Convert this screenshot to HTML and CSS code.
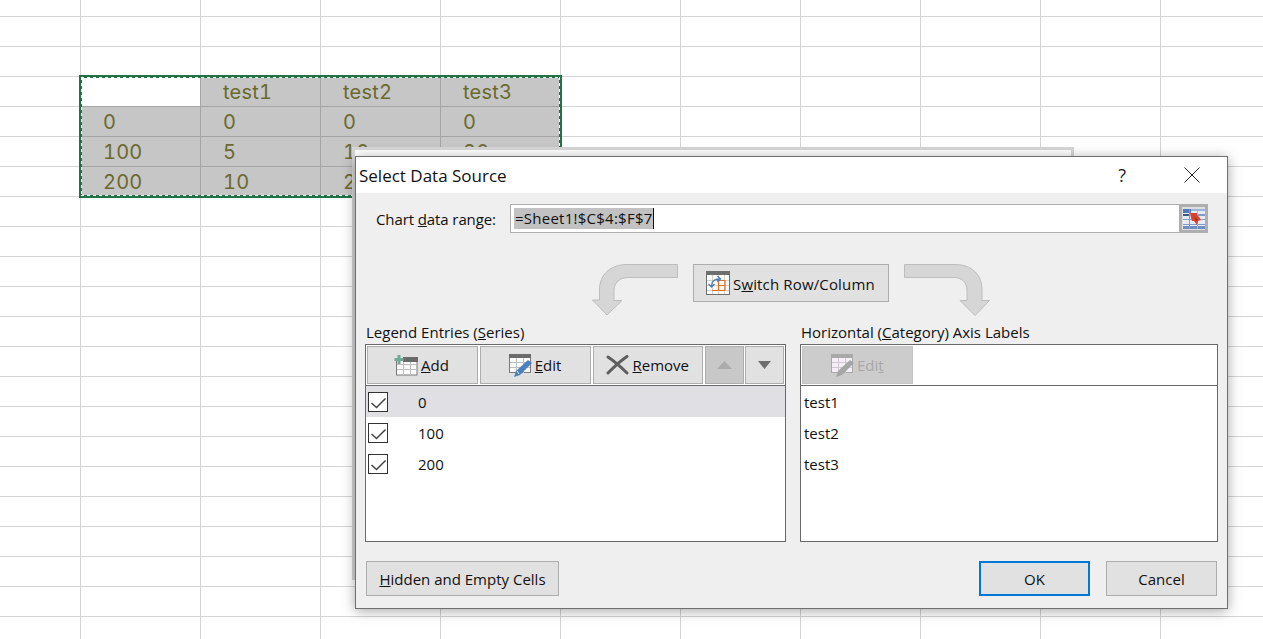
FILE: index.html
```html
<!DOCTYPE html>
<html lang="en">
<head>
<meta charset="utf-8">
<title>Select Data Source</title>
<link rel="stylesheet" href="styles.css">
</head>
<body>
<main class="sheet">
  <section class="range">
    <div class="cell blank"></div><div class="cell">test1</div><div class="cell">test2</div><div class="cell">test3</div>
    <div class="cell first">0</div><div class="cell">0</div><div class="cell">0</div><div class="cell">0</div>
    <div class="cell first">100</div><div class="cell">5</div><div class="cell">10</div><div class="cell">20</div>
    <div class="cell first">200</div><div class="cell">10</div><div class="cell">20</div><div class="cell"></div>
    <div class="ants"></div>
  </section>
</main>
<div class="ghost"></div>
<div class="dialog">
  <header class="titlebar">
    <h1 class="title">Select Data Source</h1>
    <span class="help">?</span>
    <svg class="close" width="16" height="16" viewBox="0 0 16 16"><path d="M.5.5l15 15M15.500.5l-15 15" stroke="#222" stroke-width="1" fill="none"/></svg>
  </header>
  <div class="body">
    <div class="range-row">
      <label class="range-label">Chart <u>d</u>ata range:</label>
      <div class="range-input">
        <span class="range-value"><span class="sel">=Sheet1!$C$4:$F$7</span><span class="caret"></span></span>
        <span class="picker">
          <svg width="22" height="20" viewBox="0 0 22 20">
            <rect x="0" y="0" width="22" height="20" fill="#e4ebf5"/>
            <rect x="0" y="0" width="8" height="4" fill="#4f79bd"/>
            <rect x="8" y="0" width="14" height="2" fill="#9db5d8"/>
            <rect x="0" y="5" width="7" height="2" fill="#3f5c88"/>
            <rect x="0" y="10" width="22" height="1" fill="#8aa4cb"/>
            <rect x="0" y="15" width="22" height="1" fill="#7f9cc9"/>
            <rect x="0" y="17" width="22" height="3" fill="#6f8fc2"/>
            <rect x="6" y="0" width="1" height="20" fill="#7f9cc9"/>
            <rect x="14" y="0" width="1" height="20" fill="#9db5d8"/>
            <rect x="15" y="5" width="7" height="2" fill="#7f9cc9"/>
            <path d="M7 4h7v2l2 2 2 3-3 1-1 4-3-4H9L8 9z" fill="#d9432e"/>
            <path d="M11 7l4 4-2 1z" fill="#ad2c1d"/>
          </svg>
        </span>
      </div>
    </div>
    <div class="switch-row">
      <svg class="arrow" width="86" height="52" viewBox="0 0 86 52"><path d="M85.5.5v13H36c-8 0-14 5-14 13v10h8L15 51 .5 36h7V26C7.500 10 19 .5 35 .5z" fill="#d6d6d6" stroke="#bdbdbd"/></svg>
      <button class="btn switch">
        <svg width="24" height="24" viewBox="0 0 24 24">
          <rect x=".5" y=".5" width="23" height="23" fill="#fafafa" stroke="#6e6e6e"/>
          <rect x="0" y="0" width="24" height="4" fill="#6e6e6e"/>
          <path d="M1 9.500h22M1 14.500h22M1 19.500h22M6.500 4v19M12.500 4v19M18.500 4v19" stroke="#d2d2d2" fill="none"/>
          <path d="M11 9.500h8v10H6M12.500 9.500v10M12.500 14.500H19" stroke="#e0701a" stroke-width="1.200" fill="none"/>
          <path d="M5.500 15c0-5 3-7 8-7M11.500 5l3 3-3 3M2.500 13l3 3 3-3" stroke="#4a7db5" stroke-width="1.300" fill="none"/>
        </svg>
        <span class="switch-text">S<u>w</u>itch Row/Column</span>
      </button>
      <svg class="arrow" width="86" height="52" viewBox="0 0 86 52"><path d="M.5.500v13H50c8 0 13 5 13 13v10h-7l15 15 14.500-15H78V26C78 10 67 .5 51 .5z" fill="#d6d6d6" stroke="#bdbdbd"/></svg>
    </div>
    <div class="panels">
      <section class="panel left">
        <h2 class="panel-title">Legend Entries (<u>S</u>eries)</h2>
        <div class="panel-box">
          <div class="toolbar">
            <button class="btn tool tool-add">
              <svg width="24" height="21" viewBox="0 0 24 21">
                <rect x="2.500" y="3.500" width="20.500" height="16.500" fill="#fafafa" stroke="#7a7a7a"/>
                <rect x="9" y="2" width="15" height="5" fill="#6a6a6a"/>
                <path d="M3 9.500h20M3 14.500h20M9.500 7v13M16.500 7v13" stroke="#bdbdbd" fill="none"/>
                <path d="M3.500 0h3v3h3v3h-3v3h-3V6H.5V3h3z" fill="#6fa996"/>
              </svg>
              <span><u>A</u>dd</span>
            </button>
            <button class="btn tool tool-edit">
              <svg width="24" height="23" viewBox="0 0 24 23">
                <rect x=".5" y=".5" width="21" height="18" fill="#fafafa" stroke="#7a7a7a"/>
                <rect x="0" y="0" width="22" height="4" fill="#6a6a6a"/>
                <path d="M1 8.500h20M1 13.500h20M7.500 4v15M14.500 4v15" stroke="#bdbdbd" fill="none"/>
                <path d="M19 6l4 3-12 12-6 2 2-6z" fill="#4a80bd"/>
                <path d="M8 17l2 3" stroke="#dfeaf5" fill="none"/>
              </svg>
              <span><u>E</u>dit</span>
            </button>
            <button class="btn tool tool-remove">
              <svg width="23" height="20" viewBox="0 0 23 20"><path d="M2 2c6 4 13 10 19 16M21 1.500C14 6 8 12 2 18" stroke="#5e5e5e" stroke-width="3" stroke-linecap="round" fill="none"/></svg>
              <span><u>R</u>emove</span>
            </button>
            <button class="btn mini off"><svg width="15" height="8" viewBox="0 0 15 8"><path d="M7.500 0L15 8H0z" fill="#acacac"/></svg></button>
            <button class="btn mini"><svg width="13" height="8" viewBox="0 0 13 8"><path d="M0 0h13L6.500 8z" fill="#6e6e6e"/></svg></button>
          </div>
          <ul class="list">
            <li class="row active"><span class="check"><svg width="20" height="20" viewBox="0 0 20 20"><path d="M3.500 11l5 4.500 9-9" stroke="#444" stroke-width="1.500" fill="none"/></svg></span><span class="num">0</span></li>
            <li class="row"><span class="check"><svg width="20" height="20" viewBox="0 0 20 20"><path d="M3.500 11l5 4.500 9-9" stroke="#444" stroke-width="1.500" fill="none"/></svg></span><span class="num">100</span></li>
            <li class="row"><span class="check"><svg width="20" height="20" viewBox="0 0 20 20"><path d="M3.500 11l5 4.500 9-9" stroke="#444" stroke-width="1.500" fill="none"/></svg></span><span class="num">200</span></li>
          </ul>
        </div>
      </section>
      <section class="panel right">
        <h2 class="panel-title">Horizontal (<u>C</u>ategory) Axis Labels</h2>
        <div class="panel-box">
          <div class="toolbar">
            <button class="btn tool tool-edit disabled">
              <svg width="24" height="23" viewBox="0 0 24 23">
                <rect x=".5" y=".5" width="21" height="18" fill="#f3eff5" stroke="#a8a8a8"/>
                <rect x="0" y="0" width="22" height="4" fill="#a8a8a8"/>
                <path d="M1 8.500h20M1 13.500h20M7.500 4v15M14.500 4v15" stroke="#cfc8d3" fill="none"/>
                <path d="M19 6l4 3-12 12-6 2 2-6z" fill="#a6a6a6"/>
              </svg>
              <span>Edi<u>t</u></span>
            </button>
          </div>
          <ul class="list">
            <li class="row plain">test1</li>
            <li class="row plain">test2</li>
            <li class="row plain">test3</li>
          </ul>
        </div>
      </section>
    </div>
    <footer class="footer">
      <button class="btn hidden-cells"><span><u>H</u>idden and Empty Cells</span></button>
      <div class="actions">
        <button class="btn action primary">OK</button>
        <button class="btn action">Cancel</button>
      </div>
    </footer>
  </div>
</div>
</body>
</html>
```
FILE: styles.css
```css
* { box-sizing: border-box; }
html, body { margin: 0; height: 100%; overflow: hidden; background: #fff; }
body { font-family: "Open Sans", "Liberation Sans", sans-serif; font-size: 15px; color: #111; }

.sheet {
  height: 639px;
  padding: 76px 0 0 80px;
  background-color: #fff;
  background-image:
    linear-gradient(to right, #d4d4d4 1px, transparent 1px),
    linear-gradient(to bottom, #d4d4d4 1px, transparent 1px);
  background-size: 120px 100%, 100% 30px;
  background-position: 80px 0, 0 16px;
}
.range {
  position: relative;
  display: grid;
  grid-template-columns: repeat(4, 120px);
  grid-auto-rows: 30px;
  width: 481px;
  height: 121px;
  border: 1px solid #a5a5a5;
  border-width: 0 1px 1px 0;
}
.cell {
  background: #c6c6c6;
  border-top: 1px solid #a5a5a5;
  border-left: 1px solid #a5a5a5;
  padding: 0 0 0 22px;
  font: 20px/30px "Inter", sans-serif;
  font-variant-numeric: tabular-nums;
  letter-spacing: .2px;
  color: #6a6a30;
}
.cell.blank { background: #fff; }
.ants {
  position: absolute;
  inset: -1px -2px -2px -1px;
  border: 3px solid #217346;
}
.ants::after {
  content: "";
  position: absolute;
  inset: -1px;
  background:
    linear-gradient(to right, #fff 3px, transparent 3px) 0 0 / 6px 1px repeat-x,
    linear-gradient(to right, #fff 3px, transparent 3px) 0 100% / 6px 1px repeat-x,
    linear-gradient(to bottom, #fff 3px, transparent 3px) 0 0 / 1px 6px repeat-y,
    linear-gradient(to bottom, #fff 3px, transparent 3px) 100% 0 / 1px 6px repeat-y;
}

.ghost {
  position: absolute;
  left: 352px;
  top: 147px;
  width: 722px;
  height: 433px;
  border: 3px solid #d6d6d6;
  background: #fff;
}
.dialog {
  position: absolute;
  left: 355px;
  top: 156px;
  width: 873px;
  height: 453px;
  display: flex;
  flex-direction: column;
  border: 1px solid #6f6f6f;
  background: #efefef;
  box-shadow: 0 2px 12px rgba(0, 0, 0, .35);
}
.titlebar {
  flex: none;
  display: flex;
  align-items: center;
  height: 36px;
  padding: 0 27px 0 3px;
  background: #fff;
}
.title { margin: 0; flex: 1; font-size: 17px; font-weight: 400; color: #111; }
.help { margin-right: 58px; font-size: 18px; color: #222; }
.close { display: block; }

.body { flex: 1; min-height: 0; padding: 11px 9px 11px 9px; display: flex; flex-direction: column; }
.range-row { display: flex; align-items: center; height: 29px; margin-right: 10px; padding-left: 11px; }
.range-label { width: 134px; letter-spacing: -.1px; }
.range-input {
  flex: 1;
  display: flex;
  align-items: stretch;
  height: 29px;
  background: #fff;
  border: 1px solid #aeaeae;
}
.range-value { flex: 1; display: flex; align-items: center; padding-left: 3px; }
.sel { background: #c2c2c2; line-height: 21px; padding: 0 0 0 1px; letter-spacing: .25px; }
.caret { width: 1px; height: 21px; background: #111; }
.picker {
  width: 29px;
  margin: -1px -1px -1px 0;
  display: flex;
  align-items: center;
  justify-content: center;
  background: #dedede;
  border: 3px solid #aeaeae;
}

.btn {
  display: flex;
  align-items: center;
  justify-content: center;
  gap: 3px;
  padding: 0;
  font: inherit;
  color: #111;
  background: #e1e1e1;
  border: 1px solid #adadad;
}
.switch-row { display: flex; justify-content: flex-start; align-items: flex-start; gap: 15px; margin: 31px 0 0 227px; height: 52px; }
.switch { width: 196px; height: 38px; justify-content: flex-start; padding-left: 12px; }
.switch-text { letter-spacing: .15px; padding-top: 2px; }
.arrow { display: block; flex: none; }

.panels { display: flex; gap: 14px; margin-top: 5px; }
.panel { flex: none; }
.panel.left { width: 421px; }
.panel.right { width: 418px; }
.panel-title { margin: 0 0 1px; font-size: 15px; font-weight: 400; line-height: 22px; padding-left: 1px; color: #111; }
.panel-box { height: 198px; background: #fff; border: 1px solid #696969; }
.toolbar { display: flex; gap: 2px; height: 41px; padding: 1px; border-bottom: 1px solid #696969; }
.tool { width: 111px; height: 38px; justify-content: flex-start; }
.tool-add { padding-left: 26px; }
.tool-edit { padding-left: 28px; gap: 2px; }
.tool-remove { padding-left: 12px; gap: 4px; }
.mini { width: 39px; height: 38px; }
.mini + .mini { margin-left: -1px; }
.off { background: #c8c8c8; }
.disabled { background: #ccc; color: #a8a8a8; border-color: #c4c4c4; }
.list { list-style: none; margin: 0; padding: 0; }
.row { display: flex; align-items: center; height: 31px; }
.row.active { background: #e0dfe4; }
.row.plain { padding-left: 3px; }
.check { width: 20px; height: 20px; margin-left: 2px; border: 1px solid #333; background: #fff; position: relative; }
.check svg { display: block; margin: -1px; }
.num { margin-left: 30px; }

.footer { display: flex; justify-content: space-between; margin: 19px 1px 0 1px; }
.hidden-cells { width: 193px; height: 35px; }
.actions { display: flex; gap: 16px; }
.action { width: 111px; height: 35px; }
.primary { border: 2px solid #0078d7; }
```
